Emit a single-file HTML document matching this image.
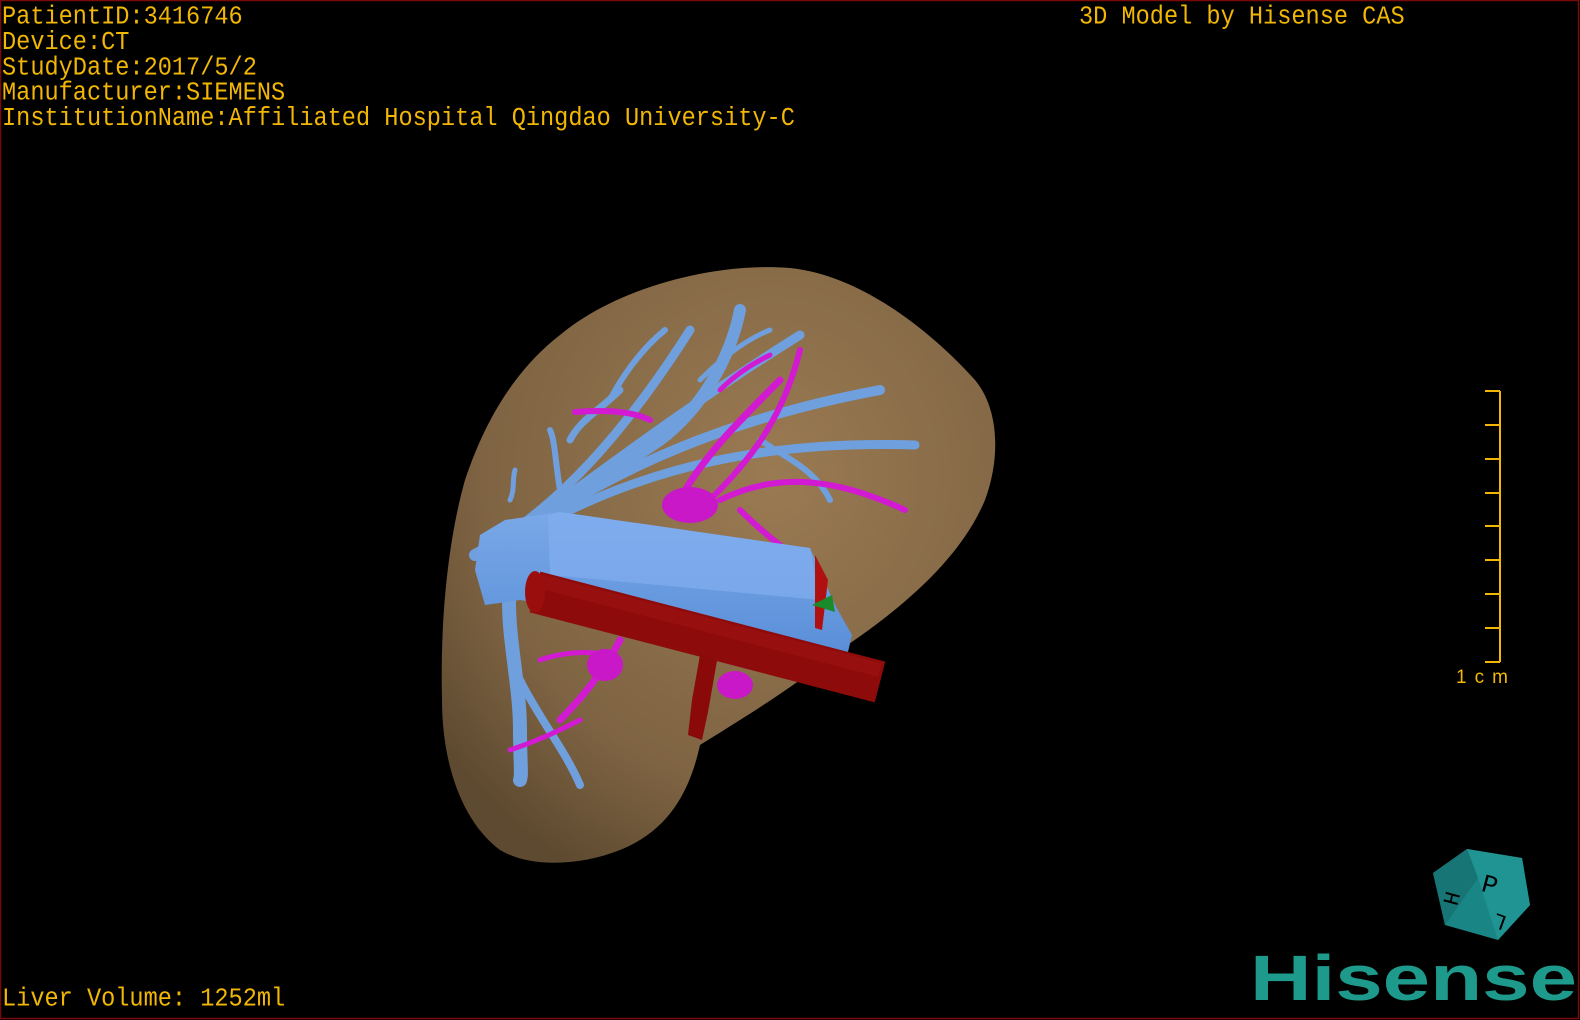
<!DOCTYPE html>
<html><head><meta charset="utf-8"><style>
html,body{margin:0;padding:0;background:#000;}
body{width:1580px;height:1020px;overflow:hidden;position:relative;}
.t{position:absolute;left:2px;color:#f2b705;font-family:"Liberation Mono",monospace;font-size:23.6px;line-height:23.1px;white-space:pre;transform:scaleY(1.1);transform-origin:0 0;}
</style></head><body>
<svg width="1580" height="1020" style="position:absolute;left:0;top:0">
<defs>
<radialGradient id="lg" cx="0.6" cy="0.35" r="0.75">
<stop offset="0" stop-color="#9a7a52"/><stop offset="0.7" stop-color="#7f6443"/><stop offset="1" stop-color="#5e4a30"/>
</radialGradient>
<linearGradient id="bx" x1="0" y1="0" x2="0" y2="1"><stop offset="0" stop-color="#7aa8e8"/><stop offset="1" stop-color="#5a8fd8"/></linearGradient>
</defs>
<rect x="0.5" y="0.5" width="1578" height="1018" fill="none" stroke="#7a0a0a" stroke-width="1.5"/>
<path d="M560,335 C620,285 720,262 790,268 C860,275 930,330 975,380 C1000,410 1000,460 985,500 C960,560 900,610 840,650 C790,690 740,720 700,745 C690,790 670,830 620,850 C580,866 530,868 500,850 C460,820 442,760 442,700 C440,620 448,540 465,480 C485,420 515,370 560,335 Z" fill="url(#lg)"/>
<g stroke="#6f9fdc" stroke-linecap="round" fill="none">
<path d="M475,555 C540,520 600,480 660,440 C700,410 730,360 740,310" stroke-width="12"/>
<path d="M500,540 C560,500 620,440 690,330" stroke-width="9"/>
<path d="M520,530 C590,480 680,410 800,335" stroke-width="9"/>
<path d="M540,520 C620,470 720,420 880,390" stroke-width="10"/>
<path d="M560,515 C650,470 760,440 915,445" stroke-width="9"/>
<path d="M570,440 C580,420 600,410 620,390" stroke-width="7"/>
<path d="M560,490 C555,460 555,440 550,430" stroke-width="6"/>
<path d="M610,400 C620,380 640,350 665,330" stroke-width="6"/>
<path d="M760,440 C790,460 815,470 830,500" stroke-width="6"/>
<path d="M700,380 C720,360 745,340 770,330" stroke-width="5"/>
<path d="M510,580 C505,630 520,680 520,730 C520,760 522,775 520,780" stroke-width="14"/>
<path d="M520,680 C540,720 565,750 580,785" stroke-width="8"/>
<path d="M510,500 C515,490 512,480 515,470" stroke-width="5"/>
</g>
<g stroke="#d21ad2" stroke-linecap="round" fill="none">
<path d="M680,500 C700,460 740,420 780,380" stroke-width="7"/>
<path d="M700,510 C740,470 780,430 800,350" stroke-width="6"/>
<path d="M720,500 C780,470 840,480 905,510" stroke-width="6"/>
<path d="M650,420 C630,410 600,410 575,412" stroke-width="6"/>
<path d="M740,510 C770,540 800,560 820,575" stroke-width="6"/>
<path d="M720,390 C740,370 760,360 770,355" stroke-width="5"/>
<path d="M560,720 C590,690 610,660 620,640" stroke-width="7"/>
<path d="M540,660 C570,650 600,650 620,660" stroke-width="5"/>
<path d="M510,750 C540,740 560,730 580,720" stroke-width="5"/>
</g>
<ellipse cx="690" cy="505" rx="28" ry="18" fill="#c818c8"/>
<ellipse cx="605" cy="665" rx="18" ry="16" fill="#c818c8"/>
<ellipse cx="735" cy="685" rx="18" ry="14" fill="#c818c8"/>
<path d="M480,535 L505,520 L560,512 L810,548 L835,605 L852,635 L848,652 L810,645 L520,600 L485,605 L475,570 Z" fill="url(#bx)"/>
<path d="M548,515 L560,512 L810,548 L820,600 L550,575 Z" fill="#82aef0" opacity="0.7"/>
<path d="M700,655 L718,655 L708,712 L702,740 L688,735 L692,700 Z" fill="#8a0a0a"/>
<line x1="535" y1="592" x2="880" y2="682" stroke="#8e0b0b" stroke-width="42"/>
<line x1="535" y1="580" x2="880" y2="670" stroke="#a01212" stroke-width="14" opacity="0.6"/>
<ellipse cx="535" cy="592" rx="10" ry="21" fill="#9a0e0e"/>
<path d="M815,555 L828,580 L822,630 L815,628 Z" fill="#b01010"/>
<path d="M812,605 L832,595 L835,612 Z" fill="#1a8a2a"/>
<g stroke="#f2b705" stroke-width="2">
<line x1="1500" y1="391" x2="1500" y2="662"/>
<line x1="1485" y1="391" x2="1500" y2="391"/><line x1="1485" y1="425" x2="1500" y2="425"/>
<line x1="1485" y1="459" x2="1500" y2="459"/><line x1="1485" y1="493" x2="1500" y2="493"/>
<line x1="1485" y1="526" x2="1500" y2="526"/><line x1="1485" y1="560" x2="1500" y2="560"/>
<line x1="1485" y1="594" x2="1500" y2="594"/><line x1="1485" y1="628" x2="1500" y2="628"/>
<line x1="1485" y1="662" x2="1500" y2="662"/>
</g>
<text x="1456" y="683" fill="#f2b705" font-family="Liberation Sans,sans-serif" font-size="19" textLength="52">1cm</text>
<path d="M1433,873 L1467,849 L1522,858 L1530,905 L1498,940 L1445,925 Z" fill="#1a8585"/>
<path d="M1467,849 L1522,858 L1530,905 L1498,940 L1478,878 Z" fill="#209393"/>
<path d="M1433,873 L1467,849 L1478,878 L1445,925 Z" fill="#177575"/>
<text x="1482" y="893" font-family="Liberation Mono,monospace" font-size="26" fill="#000" transform="rotate(15 1490 885)">P</text>
<text x="1490" y="930" font-family="Liberation Mono,monospace" font-size="22" fill="#000" transform="rotate(200 1498 922)">L</text>
<text x="1445" y="905" font-family="Liberation Mono,monospace" font-size="22" fill="#000" transform="rotate(-75 1452 898)">H</text>
<text x="1250" y="1000" font-family="Liberation Sans,sans-serif" font-weight="bold" font-size="64" fill="#1e9a8c" textLength="327" lengthAdjust="spacingAndGlyphs">Hisense</text>
</svg>
<div class="t" style="top:5px">PatientID:3416746
Device:CT
StudyDate:2017/5/2
Manufacturer:SIEMENS
InstitutionName:Affiliated Hospital Qingdao University-C</div>
<div class="t" style="top:5px;left:1079px">3D Model by Hisense CAS</div>
<div class="t" style="top:987px">Liver Volume: 1252ml</div>
</body></html>
